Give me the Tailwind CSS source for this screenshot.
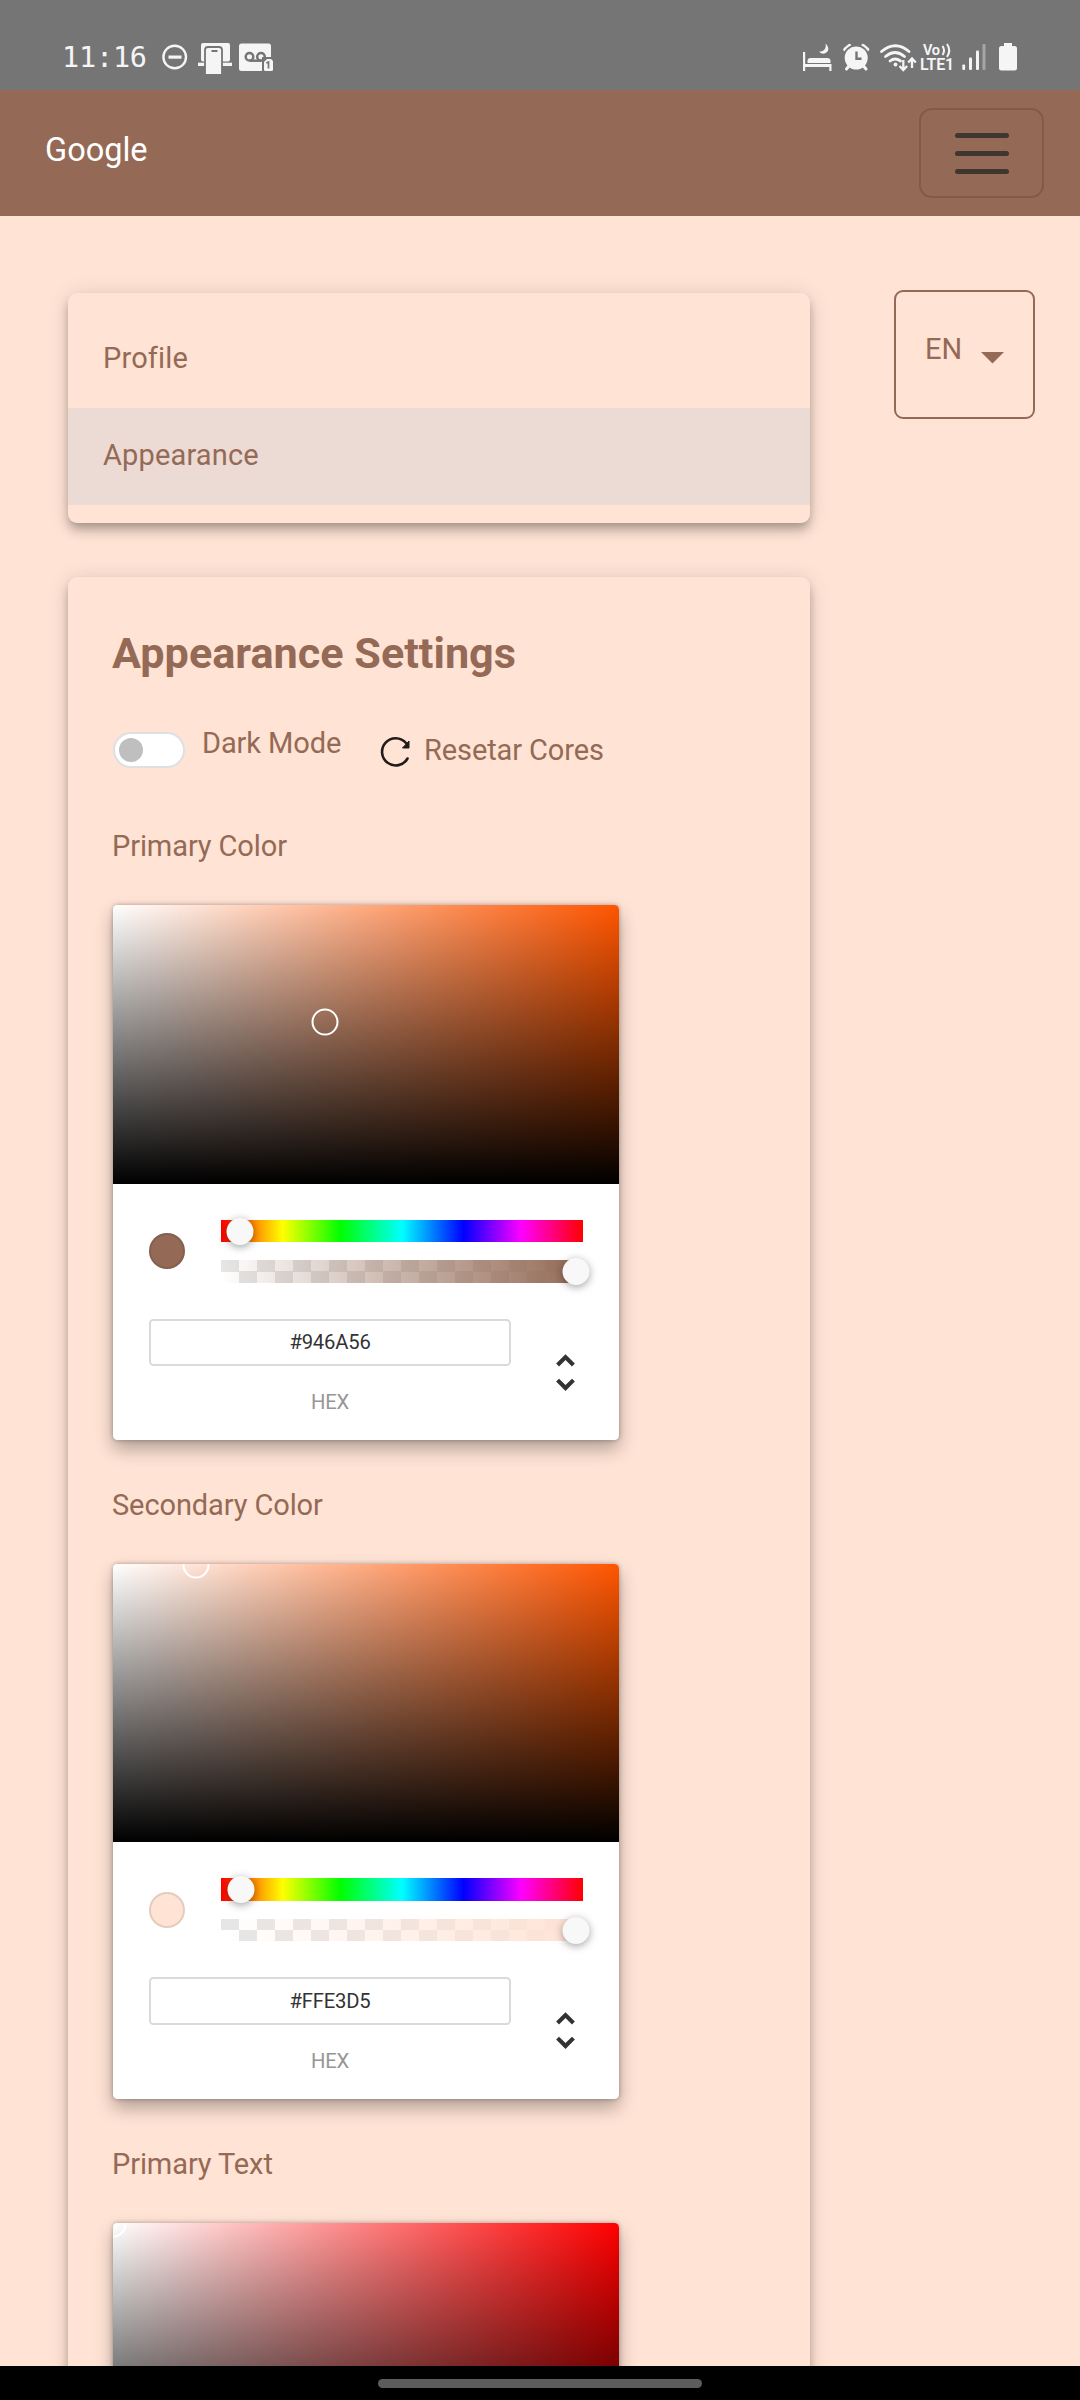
<!DOCTYPE html>
<html lang="en">
<head>
<meta charset="utf-8">
<title>Appearance Settings</title>
<script src="https://cdn.jsdelivr.net/npm/@tailwindcss/browser@4"></script>
</head>
<body class="w-[1080px] h-[2400px] overflow-hidden bg-[#ffe3d5] text-[#946a56] font-['Roboto',sans-serif] text-[29px] tracking-[-0.1px]">
<svg class="hidden">
  <symbol id="unfold" viewBox="0 0 24 24"><path fill="#333" d="M12,5.83L15.17,9L16.59,7.59L12,3L7.41,7.59L8.83,9L12,5.83M12,18.17L8.83,15L7.42,16.41L12,21L16.59,16.41L15.17,15L12,18.17Z"/></symbol>
</svg>

<!-- Status bar -->
<header class="h-[90px] bg-[#757575] text-[#f5f5f5] flex items-center pt-[24px] pl-[62px] pr-[59px] pb-0">
  <div class="w-[98px] h-[66px] leading-[67px] font-['DejaVu_Sans_Mono',monospace] text-[28.500px] tracking-[-0.2px]">11:16</div>
  <svg class="h-[66px] w-[116px]" viewBox="160 24 116 66" fill="#f5f5f5">
    <circle cx="174.7" cy="57" r="11.3" fill="none" stroke="#f5f5f5" stroke-width="2.4"/>
    <path d="M168.500 55.500h13v3.200h-13z"/>
    <rect x="201" y="43" width="29" height="18.500" rx="2"/>
    <rect x="198" y="62.700" width="34" height="3.300"/>
    <path d="M205 74v-24q0-3 3-3h11q3 0 3 3v24" stroke="#757575" stroke-width="1.800"/>
    <path d="M211.500 50h6v2h-6z" fill="#757575"/>
    <rect x="239" y="43.500" width="32" height="27.500" rx="2.500"/>
    <g fill="none" stroke="#757575" stroke-width="2.500"><circle cx="249.500" cy="56.800" r="3.800"/><circle cx="261" cy="56.800" r="3.800"/><path d="M249.500 60.700h12"/></g>
    <path d="M262 57h12v15h-12z" fill="#757575"/>
    <path d="M267 59h4l2 2v8.500q0 1.500-1.500 1.500h-6q-1.500 0-1.500-1.500v-7.500z"/>
    <path d="M266.300 63l2.200-1v6.500" fill="none" stroke="#757575" stroke-width="1.700"/>
  </svg>
  <svg class="ml-auto h-[66px] w-[141px]" viewBox="800 24 141 66" fill="#f5f5f5">
    <path d="M803 52h2.200v12h26.300v7h-2.200v-4h-24.100v4h-2.200z"/>
    <path d="M807.500 63v-2q0-3 3-3h16.500q3.500 0 3.500 3v2z"/>
    <path d="M825.500 43.500c4.500 4 3.500 9.500-2 10.200c-1.800 0-3.200-.7-4.500-2c5.500 0 7.500-3.500 6.500-8.200z"/>
    <path d="M845 49.500l4.500-3.800M863 45.700l4.500 3.800" stroke="#f5f5f5" stroke-width="3.600" stroke-linecap="round"/>
    <path d="M849 66l-2.500 3M863.500 66l2.500 3" stroke="#f5f5f5" stroke-width="3" stroke-linecap="round"/>
    <circle cx="856.200" cy="58" r="12.600" fill="none" stroke="#757575" stroke-width="1.600" stroke-dasharray="39.600 39.600" transform="rotate(180 856.200 58)"/>
    <circle cx="856.200" cy="58" r="11.500"/>
    <path d="M856.500 51.500v7.200h5" fill="none" stroke="#757575" stroke-width="2.400"/>
    <g fill="none" stroke="#f5f5f5" stroke-width="2.800" stroke-linecap="round"><path d="M881.500 51.500q14-11.500 27.500 0"/><path d="M885.500 56.500q9.500-8 19 0"/><path d="M890 61q5-4 10.500 0"/></g>
    <circle cx="895.500" cy="64.500" r="1.900"/>
    <g fill="none" stroke="#f5f5f5" stroke-width="2.300"><path d="M903.300 60v9.500M899.500 66l3.800 4l3.800-4M912 68v-9M908.200 62.500l3.800-4l3.800 4"/></g>
    <text x="923" y="55" font-size="14.500" font-weight="600" letter-spacing="-0.300">Vo</text>
  </svg>
  <svg class="h-[66px] w-[80px]" viewBox="941 24 80 66" fill="#f5f5f5">
    <path d="M942.500 46q3 4.500 0 9M947 44q4.500 6.500 0 13" fill="none" stroke="#f5f5f5" stroke-width="2"/>
    <rect x="962.300" y="64.500" width="2.800" height="5.500" rx="1"/><rect x="969" y="57.500" width="3" height="12.500" rx="1"/><rect x="976" y="50.500" width="3" height="19.500" rx="1"/><rect x="982.500" y="44" width="3" height="26" rx="1" fill="#a6a6a6"/>
    <path d="M1004 43h8v3h2.500q2.500 0 2.500 2.500v19.500q0 2.500-2.500 2.500h-13q-2.500 0-2.500-2.500v-19.500q0-2.500 2.500-2.500h2.500z"/>
  </svg>
  <span class="absolute left-[920px] top-[57px] leading-[16px] text-[16px] font-semibold tracking-[-0.2px]">LTE1</span>
</header>

<!-- Navbar -->
<nav class="h-[126px] bg-[#946a56] flex items-start justify-between pl-[45px] pr-[36px] pt-[18px]">
  <a class="text-white text-[32.500px] leading-[85px] tracking-[0px]">Google</a>
  <button class="w-[125px] h-[90px] border-2 border-[#805b48] rounded-[13px] flex flex-col items-center justify-center gap-[13px]">
    <span class="w-[54px] h-[5px] rounded-full bg-[#3f3531]"></span>
    <span class="w-[54px] h-[5px] rounded-full bg-[#3f3531]"></span>
    <span class="w-[54px] h-[5px] rounded-full bg-[#3f3531]"></span>
  </button>
</nav>

<main class="h-[2150px] overflow-hidden flex items-start justify-between pl-[68px] pr-[45px]">
  <div class="w-[742px] pt-[77px] flex flex-col gap-[54px]">
    <ul class="h-[230px] py-[18px] rounded-[9px] tracking-[0.15px] bg-[#ffe3d5] shadow-[0_4.5px_9px_-2px_rgba(0,0,0,.2),0_9px_11px_0_rgba(0,0,0,.14),0_2px_22px_0_rgba(0,0,0,.12)]">
      <li class="h-[97px] leading-[94px] px-[35px]">Profile</li>
      <li class="h-[97px] leading-[94px] px-[35px] bg-[#ecdad4]">Appearance</li>
    </ul>

    <section class="h-[2200px] px-[45px] rounded-[9px] bg-[#ffe3d5] shadow-[0_4.5px_9px_-2px_rgba(0,0,0,.2),0_9px_11px_0_rgba(0,0,0,.14),0_2px_22px_0_rgba(0,0,0,.12)]">
      <h1 class="h-[144px] pt-[47px] leading-[60px] text-[43.200px] font-bold tracking-[0px] -ml-px">Appearance Settings</h1>
      <div class="h-[94px] pt-[11px] flex items-start">
        <span class="w-[72px] h-[36px] rounded-full border-2 border-[#dee0e3] bg-white flex items-center pl-[4px]"><span class="size-6 rounded-full bg-[#bfbfbf]"></span></span>
        <span class="w-[179px] pl-[17px] -mt-[6px] leading-[35px]">Dark Mode</span>
        <svg class="w-[36px] h-[36px] ml-[13px] mt-[2px]" viewBox="379 734 36 36"><path d="M409.500 758.500a13.600 13.600 0 1 1-1.500-15.500" fill="none" stroke="#201c1a" stroke-width="2.600" stroke-linecap="round"/><path d="M411 741v7h-6.500z" fill="#201c1a" stroke="#201c1a" stroke-width="1"/></svg>
        <span class="pl-[11px] mt-[1px] leading-[35px]">Resetar Cores</span>
      </div>

      <div class="h-[659px]">
        <h2 class="h-[90px] leading-[62px] -ml-px">Primary Color</h2>
        <div class="w-[506px] h-[535px] rounded-[4.500px] bg-white shadow-[0_0_4.5px_rgba(0,0,0,.3),0_9px_18px_rgba(0,0,0,.3)]">
          <div class="relative h-[279px] overflow-hidden rounded-t-[4.500px] bg-[linear-gradient(to_top,#000,transparent),linear-gradient(to_right,#fff,rgba(255,255,255,0))] bg-[#ff5500]">
            <span class="absolute size-[27px] -translate-x-1/2 -translate-y-1/2 rounded-full border-[2.500px] border-white" style="left:212px;top:116.500px"></span>
          </div>
          <div class="h-[256px] px-9 pt-9">
            <div class="flex items-center">
              <span class="size-9 mr-9 -mt-[2px] rounded-full bg-[#946a56] shadow-[inset_0_0_0_2px_rgba(0,0,0,.1)]"></span>
              <div class="w-[362px] flex flex-col gap-[18px]">
                <div class="relative h-[22px] bg-[linear-gradient(to_right,#f00_0%,#ff0_17%,#0f0_33%,#0ff_50%,#00f_67%,#f0f_83%,#f00_100%)]"><span class="absolute -top-[2px] size-[27px] -translate-x-1/2 rounded-full bg-[#f8f8f8] shadow-[0_2px_9px_rgba(0,0,0,.37)]" style="left:19px"></span></div>
                <div class="relative h-[23px] bg-[linear-gradient(to_right,rgba(148,106,86,0),#946a56),conic-gradient(#fff_25%,#e6e6e6_0_50%,#fff_0_75%,#e6e6e6_0)] bg-[size:100%_100%,36px_23px]"><span class="absolute -top-[2px] size-[27px] -translate-x-1/2 rounded-full bg-[#f8f8f8] shadow-[0_2px_9px_rgba(0,0,0,.37)]" style="left:355px"></span></div>
              </div>
            </div>
            <div class="flex pt-9">
              <div class="w-[362px] shrink-0 text-center text-[20.250px] tracking-[-0.2px]">
                <div class="h-[47px] leading-[43px] rounded-[4.500px] border-2 border-[#dadada] text-[#333]">#946A56</div>
                <div class="pt-[24px] leading-[24px] text-[#969696]">HEX</div>
              </div>
              <svg class="w-[49px] h-[49px] shrink-0 ml-[29.500px] mt-[29px]"><use href="#unfold"/></svg>
            </div>
          </div>
        </div>
      </div>

      <div class="h-[659px]">
        <h2 class="h-[90px] leading-[62px] -ml-px">Secondary Color</h2>
        <div class="w-[506px] h-[535px] rounded-[4.500px] bg-white shadow-[0_0_4.5px_rgba(0,0,0,.3),0_9px_18px_rgba(0,0,0,.3)]">
          <div class="relative h-[278px] overflow-hidden rounded-t-[4.500px] bg-[linear-gradient(to_top,#000,transparent),linear-gradient(to_right,#fff,rgba(255,255,255,0))] bg-[#ff5500]">
            <span class="absolute size-[27px] -translate-x-1/2 -translate-y-1/2 rounded-full border-[2.500px] border-white" style="left:83px;top:.5px"></span>
          </div>
          <div class="h-[257px] px-9 pt-9">
            <div class="flex items-center">
              <span class="size-9 mr-9 rounded-full bg-[#ffe3d5] shadow-[inset_0_0_0_2px_rgba(0,0,0,.1)]"></span>
              <div class="w-[362px] flex flex-col gap-[18px]">
                <div class="relative h-[23px] bg-[linear-gradient(to_right,#f00_0%,#ff0_17%,#0f0_33%,#0ff_50%,#00f_67%,#f0f_83%,#f00_100%)]"><span class="absolute -top-[2px] size-[27px] -translate-x-1/2 rounded-full bg-[#f8f8f8] shadow-[0_2px_9px_rgba(0,0,0,.37)]" style="left:20px"></span></div>
                <div class="relative h-[22px] bg-[linear-gradient(to_right,rgba(255,227,213,0),#ffe3d5),conic-gradient(#fff_25%,#e6e6e6_0_50%,#fff_0_75%,#e6e6e6_0)] bg-[size:100%_100%,36px_22px]"><span class="absolute -top-[2px] size-[27px] -translate-x-1/2 rounded-full bg-[#f8f8f8] shadow-[0_2px_9px_rgba(0,0,0,.37)]" style="left:355px"></span></div>
              </div>
            </div>
            <div class="flex pt-9">
              <div class="w-[362px] shrink-0 text-center text-[20.250px] tracking-[-0.2px]">
                <div class="h-[48px] leading-[45px] rounded-[4.500px] border-2 border-[#dadada] text-[#333]">#FFE3D5</div>
                <div class="pt-[24px] leading-[24px] text-[#969696]">HEX</div>
              </div>
              <svg class="w-[49px] h-[49px] shrink-0 ml-[29.500px] mt-[29px]"><use href="#unfold"/></svg>
            </div>
          </div>
        </div>
      </div>

      <div>
        <h2 class="h-[90px] leading-[62px] -ml-px">Primary Text</h2>
        <div class="w-[506px] h-[535px] rounded-[4.500px] bg-white shadow-[0_0_4.5px_rgba(0,0,0,.3),0_9px_18px_rgba(0,0,0,.3)]">
          <div class="relative h-[279px] overflow-hidden rounded-t-[4.500px] bg-[linear-gradient(to_top,#000,transparent),linear-gradient(to_right,#fff,rgba(255,255,255,0))] bg-[#ff0000]">
            <span class="absolute size-[27px] -translate-x-1/2 -translate-y-1/2 rounded-full border-[2.500px] border-white" style="left:0;top:.5px"></span>
          </div>
        </div>
      </div>
    </section>
  </div>

  <div class="mt-[74px] w-[141px] h-[129px] rounded-[9px] border-2 border-[#946a56] flex pl-[29px]">
    <span class="leading-[115px] tracking-[0px] w-[56px]">EN</span>
    <svg class="w-[23px] h-[12px] mt-[59.500px]" viewBox="0 0 23 12"><path d="M0 0h23L11.500 11.500z" fill="#946a56"/></svg>
  </div>
</main>

<!-- Gesture bar -->
<footer class="h-[34px] bg-black flex justify-center pt-[13px]"><span class="w-[324px] h-[9px] rounded-full bg-[#5c5c5c]"></span></footer>
</body>
</html>
